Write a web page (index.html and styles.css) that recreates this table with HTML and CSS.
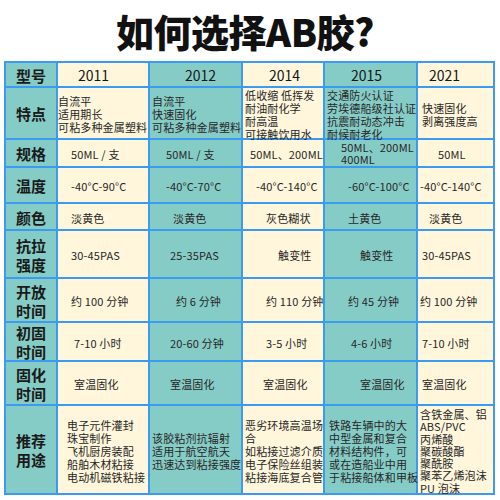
FILE: index.html
```html
<!DOCTYPE html>
<html lang="zh-CN">
<head>
<meta charset="utf-8">
<title>如何选择AB胶?</title>
<link rel="stylesheet" href="styles.css">
</head>
<body>
<h1 class="title">如何选择AB胶?</h1>
<div class="grid">
  <div class="lab">型号</div>
  <div class="yr p20">2011</div>
  <div class="yr p35">2012</div>
  <div class="yr p26">2014</div>
  <div class="yr p26">2015</div>
  <div class="yr p11">2021</div>

  <div class="lab">特点</div>
  <div class="val p0">自流平<br>适用期长<br>可粘多种金属塑料</div>
  <div class="val p2">自流平<br>快速固化<br>可粘多种金属塑料</div>
  <div class="val p2">低收缩 低挥发<br>耐油耐化学<br>耐高温<br>可接触饮用水</div>
  <div class="val p2">交通防火认证<br>劳埃德船级社认证<br>抗震耐动态冲击<br>耐候耐老化</div>
  <div class="val p4">快速固化<br>剥离强度高</div>

  <div class="lab">规格</div>
  <div class="val p13">50ML / 支</div>
  <div class="val p16">50ML / 支</div>
  <div class="val p7">50ML、200ML</div>
  <div class="val p16 tight">50ML、200ML<br>400ML</div>
  <div class="val p20">50ML</div>

  <div class="lab">温度</div>
  <div class="val p13">-40°C-90°C</div>
  <div class="val p16">-40°C-70°C</div>
  <div class="val p13">-40°C-140°C</div>
  <div class="val p23">-60°C-100°C</div>
  <div class="val p2">-40°C-140°C</div>

  <div class="lab">颜色</div>
  <div class="val p13">淡黄色</div>
  <div class="val p23">淡黄色</div>
  <div class="val p23">灰色糊状</div>
  <div class="val p23">土黄色</div>
  <div class="val p11">淡黄色</div>

  <div class="lab">抗拉<br>强度</div>
  <div class="val p13">30-45PAS</div>
  <div class="val p20">25-35PAS</div>
  <div class="val p35">触变性</div>
  <div class="val p35">触变性</div>
  <div class="val p4">30-45PAS</div>

  <div class="lab">开放<br>时间</div>
  <div class="val p13">约 100 分钟</div>
  <div class="val p26">约 6 分钟</div>
  <div class="val p23">约 110 分钟</div>
  <div class="val p23">约 45 分钟</div>
  <div class="val p2">约 100 分钟</div>

  <div class="lab">初固<br>时间</div>
  <div class="val p16">7-10 小时</div>
  <div class="val p20">20-60 分钟</div>
  <div class="val p23">3-5 小时</div>
  <div class="val p26">4-6 小时</div>
  <div class="val p4">7-10 小时</div>

  <div class="lab">固化<br>时间</div>
  <div class="val p16">室温固化</div>
  <div class="val p20">室温固化</div>
  <div class="val p20">室温固化</div>
  <div class="val p35">室温固化</div>
  <div class="val p4">室温固化</div>

  <div class="lab">推荐<br>用途</div>
  <div class="val p9">电子元件灌封<br>珠宝制作<br>飞机厨房装配<br>船舶木材粘接<br>电动机磁铁粘接</div>
  <div class="val p2">该胶粘剂抗辐射<br>适用于航空航天<br>迅速达到粘接强度</div>
  <div class="val p2">恶劣环境高温场<br>合<br>如粘接过滤介质<br>电子保险丝组装<br>粘接海底复合管</div>
  <div class="val p4">铁路车辆中的大<br>中型金属和复合<br>材料结构件，可<br>或在造船业中用<br>于粘接船体和甲板</div>
  <div class="val p2 dense">含铁金属、铝<br>ABS/PVC<br>丙烯酸<br>聚碳酸酯<br>聚酰胺<br>聚苯乙烯泡沫<br>PU 泡沫</div>
</div>
</body>
</html>
```

FILE: styles.css
```css
html, body {
  margin: 0;
  padding: 0;
  background: #ffffff;
}

body {
  width: 500px;
  height: 500px;
  overflow: hidden;
  font-family: "Noto Sans CJK SC", "Noto Sans", sans-serif;
  color: #222;
}

.title {
  margin: 0;
  height: 61px;
  line-height: 61px;
  text-align: center;
  font-size: 38px;
  font-weight: 900;
  color: #111;
  letter-spacing: -0.5px;
  padding-right: 10px;
}

.grid {
  display: grid;
  grid-template-columns: 50px 90px 91px 80px 91px 75px;
  grid-template-rows: 23px 50px 26px 34px 25px 46px 42px 37px 42px 87px;
  gap: 2px;
  padding: 2px;
  margin-left: 4px;
  width: max-content;
  background: #3b9bf0;
}

.grid > div {
  display: flex;
  align-items: center;
  background: #fff6dc;
}

.grid > div:nth-child(6n+1),
.grid > div:nth-child(6n+3),
.grid > div:nth-child(6n+5) {
  background: #86ccc6;
}

.lab {
  justify-content: center;
  text-align: center;
  font-size: 15px;
  line-height: 19px;
  font-weight: 700;
  color: #1a1a1a;
  padding-top: 1px;
}

.yr {
  font-size: 14px;
  color: #151515;
}

.val {
  font-size: 11px;
  line-height: 13px;
  letter-spacing: 0.15px;
  color: #262626;
  white-space: nowrap;
  padding-top: 3px;
}

.val.tight {
  line-height: 12px;
  padding-top: 0;
}

.val.dense {
  line-height: 12.3px;
}

.p0 { padding-left: 0; }
.p2 { padding-left: 2px; }
.p4 { padding-left: 4px; }
.p7 { padding-left: 7px; }
.p9 { padding-left: 9px; }
.p11 { padding-left: 11px; }
.p13 { padding-left: 13px; }
.p16 { padding-left: 16px; }
.p20 { padding-left: 20px; }
.p23 { padding-left: 23px; }
.p26 { padding-left: 26px; }
.p35 { padding-left: 35px; }
```
